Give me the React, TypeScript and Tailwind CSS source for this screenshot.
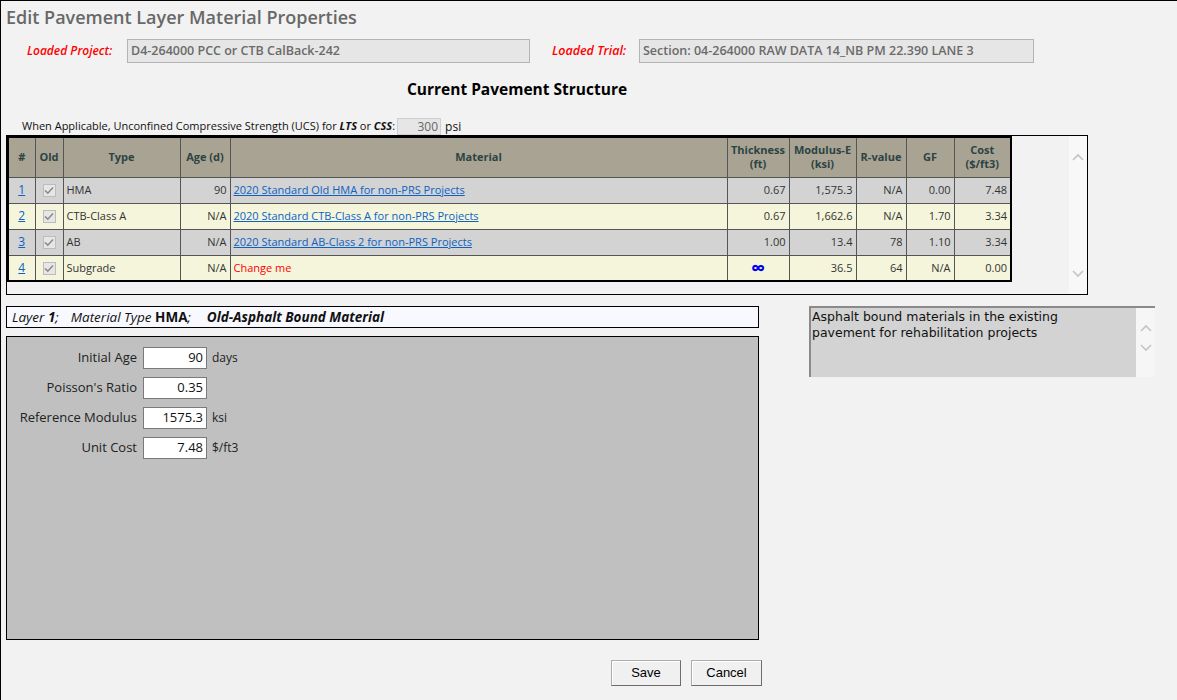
import React from "react";

const font = { fontFamily: '"Open Sans", "Noto Sans", sans-serif' };

type Row = {
  n: number;
  type: string;
  age: string;
  material: string;
  link: boolean;
  thick: string;
  mod: string;
  r: string;
  gf: string;
  cost: string;
};

const rows: Row[] = [
  { n: 1, type: "HMA", age: "90", material: "2020 Standard Old HMA for non-PRS Projects", link: true, thick: "0.67", mod: "1,575.3", r: "N/A", gf: "0.00", cost: "7.48" },
  { n: 2, type: "CTB-Class A", age: "N/A", material: "2020 Standard CTB-Class A for non-PRS Projects", link: true, thick: "0.67", mod: "1,662.6", r: "N/A", gf: "1.70", cost: "3.34" },
  { n: 3, type: "AB", age: "N/A", material: "2020 Standard AB-Class 2 for non-PRS Projects", link: true, thick: "1.00", mod: "13.4", r: "78", gf: "1.10", cost: "3.34" },
  { n: 4, type: "Subgrade", age: "N/A", material: "Change me", link: false, thick: "∞", mod: "36.5", r: "64", gf: "N/A", cost: "0.00" },
];

function Chevron({ up }: { up?: boolean }) {
  return (
    <svg width="12" height="8" viewBox="0 0 12 8">
      <polyline
        points={up ? "1,7 6,2 11,7" : "1,1 6,6 11,1"}
        fill="none"
        stroke="#c4c4c4"
        strokeWidth="1.6"
      />
    </svg>
  );
}

function Check() {
  return (
    <span className="inline-flex h-[13px] w-[13px] items-center justify-center border border-[#bcbcbc] bg-[#e6e6e6] align-middle">
      <svg width="10" height="9" viewBox="0 0 10 9">
        <polyline points="1,4.5 3.8,7.2 9,1.5" fill="none" stroke="#8a8a8a" strokeWidth="1.6" />
      </svg>
    </span>
  );
}

function Field({ label, value, unit }: { label: string; value: string; unit?: string }) {
  return (
    <div className="flex h-[22px] items-center">
      <div className="w-[136px] pr-[6px] text-right text-[13px] text-[#222]">{label}</div>
      <div className="flex h-[22px] w-[64px] items-center justify-end border border-[#7a7a7a] bg-white pr-[3px] text-[13px] text-[#111]">
        {value}
      </div>
      {unit && <div className="pl-[5px] text-[12px] text-[#222]">{unit}</div>}
    </div>
  );
}

export default function App() {
  const th = "border border-[#555] px-[2px] text-center text-[11px] font-bold leading-[14px] text-[#2c4443]";
  const cell = "border border-[#555] px-[3px] h-[26px]";
  const td = cell + " text-[11px] text-[#333]";
  return (
    <div style={font} className="h-[700px] w-full overflow-hidden border-l border-t border-black bg-[#f2f2f2]">
      <div className="pl-[5px] pt-[3px] text-[18px] font-semibold leading-[26px] text-[#686868]">
        Edit Pavement Layer Material Properties
      </div>

      <div className="mt-[9px] flex items-center">
        <div className="w-[126px] pl-[26px] text-[12px] font-semibold italic text-[#ff0000]">Loaded Project:</div>
        <div className="flex h-[24px] w-[403px] items-center border border-[#b4b4b4] bg-[#e6e6e6] pl-[3px] text-[12.5px] font-semibold text-[#6a6a6a]">
          D4-264000 PCC or CTB CalBack-242
        </div>
        <div className="w-[109px] pl-[22px] text-[12.5px] font-semibold italic text-[#ff0000]">Loaded Trial:</div>
        <div className="flex h-[24px] w-[395px] items-center border border-[#b4b4b4] bg-[#e6e6e6] pl-[3px] text-[12.5px] font-semibold text-[#6a6a6a]">
          Section: 04-264000 RAW DATA 14_NB PM 22.390 LANE 3
        </div>
      </div>

      <div className="mt-[15px] w-[1032px] text-center text-[15.5px] font-bold leading-[22px] text-black">
        Current Pavement Structure
      </div>

      <div className="mt-[18px] flex h-[17px] items-center pl-[21px] text-[11px] text-[#111]">
        <span>
          When Applicable, Unconfined Compressive Strength (UCS) for <b className="italic">LTS</b> or <b className="italic">CSS</b>:
        </span>
        <span className="ml-[2px] flex h-[17px] w-[44px] items-center justify-end border border-[#cfcfcf] bg-[#e6e6e6] pr-[2px] text-[12px] text-[#666]">
          300
        </span>
        <span className="ml-[4px] text-[12px]">psi</span>
      </div>

      <div className="ml-[5px] flex h-[160px] w-[1082px] border border-black">
        <div className="flex-1">
          <table className="table-fixed border-collapse border-2 border-black" style={{ width: 1003 }}>
            <colgroup>
              <col style={{ width: 27 }} />
              <col style={{ width: 28 }} />
              <col style={{ width: 117 }} />
              <col style={{ width: 50 }} />
              <col style={{ width: 497 }} />
              <col style={{ width: 62 }} />
              <col style={{ width: 67 }} />
              <col style={{ width: 50 }} />
              <col style={{ width: 48 }} />
              <col style={{ width: 57 }} />
            </colgroup>
            <thead>
              <tr className="h-[40px] bg-[#a9a393]">
                <th className={th}>#</th>
                <th className={th}>Old</th>
                <th className={th}>Type</th>
                <th className={th}>Age (d)</th>
                <th className={th}>Material</th>
                <th className={th}>
                  Thickness
                  <br />
                  (ft)
                </th>
                <th className={th}>
                  Modulus-E
                  <br />
                  (ksi)
                </th>
                <th className={th}>R-value</th>
                <th className={th}>GF</th>
                <th className={th}>
                  Cost
                  <br />
                  ($/ft3)
                </th>
              </tr>
            </thead>
            <tbody>
              {rows.map((r, i) => (
                <tr key={r.n} className={i % 2 === 0 ? "bg-[#d3d3d3]" : "bg-[#f5f5dc]"}>
                  <td className={td + " text-center"}>
                    <span className="text-[12px] text-[#0b62c4] underline">{r.n}</span>
                  </td>
                  <td className={td + " text-center"}>
                    <Check />
                  </td>
                  <td className={td}>{r.type}</td>
                  <td className={td + " text-right"}>{r.age}</td>
                  <td className={td}>
                    {r.link ? (
                      <span className="text-[#0b62c4] underline">{r.material}</span>
                    ) : (
                      <span className="text-[#ff0000]">{r.material}</span>
                    )}
                  </td>
                  {r.thick === "∞" ? (
                    <td className={cell + " text-center text-[20px] font-bold leading-[20px] text-[#0000ee]"}>∞</td>
                  ) : (
                    <td className={td + " text-right"}>{r.thick}</td>
                  )}
                  <td className={td + " text-right"}>{r.mod}</td>
                  <td className={td + " text-right"}>{r.r}</td>
                  <td className={td + " text-right"}>{r.gf}</td>
                  <td className={td + " text-right"}>{r.cost}</td>
                </tr>
              ))}
            </tbody>
          </table>
        </div>
        <div className="flex w-[18px] flex-col items-center justify-between bg-[#f8f8f8] pb-[16px] pt-[17px]">
          <Chevron up />
          <Chevron />
        </div>
      </div>

      <div className="mt-[11px] flex">
        <div className="ml-[5px] w-[753px]">
          <div className="flex h-[22px] items-center border border-black bg-[#f8f8ff] pl-[5px] text-[13.5px] italic text-[#111]">
            <span>
              Layer <b>1</b>;
            </span>
            <span className="ml-[12px]">
              Material Type <b className="not-italic">HMA</b>;
            </span>
            <b className="ml-[16px]">Old-Asphalt Bound Material</b>
          </div>
          <div className="mt-[8px] flex h-[304px] flex-col gap-[8px] border border-black bg-[#c0c0c0] pt-[10px]">
            <Field label="Initial Age" value="90" unit="days" />
            <Field label="Poisson's Ratio" value="0.35" />
            <Field label="Reference Modulus" value="1575.3" unit="ksi" />
            <Field label="Unit Cost" value="7.48" unit="$/ft3" />
          </div>
        </div>
        <div className="ml-[50px] flex h-[71px] w-[346px] border-l-2 border-t-2 border-[#8a8a8a] bg-[#d3d3d3]">
          <div
            className="flex-1 pl-[1px] pt-[1px] text-[12.5px] leading-[16px] text-[#111]"
            style={{ fontFamily: '"DejaVu Sans", sans-serif' }}
          >
            <div className="w-[265px]">Asphalt bound materials in the existing pavement for rehabilitation projects</div>
          </div>
          <div className="flex w-[19px] flex-col items-center gap-[12px] bg-[#f6f6f6] pt-[16px]">
            <Chevron up />
            <Chevron />
          </div>
        </div>
      </div>

      <div className="mt-[20px] flex gap-[10px] pl-[610px]" style={{ fontFamily: '"Liberation Sans", Arial, sans-serif' }}>
        <button className="h-[26px] w-[70px] border border-[#adadad] border-b-[#6d6d6d] border-r-[#6d6d6d] bg-[#f0f0f0] text-[13px] text-black shadow-[inset_1px_1px_0_#fff]">
          Save
        </button>
        <button className="h-[26px] w-[71px] border border-[#adadad] border-b-[#6d6d6d] border-r-[#6d6d6d] bg-[#f0f0f0] text-[13px] text-black shadow-[inset_1px_1px_0_#fff]">
          Cancel
        </button>
      </div>
    </div>
  );
}
